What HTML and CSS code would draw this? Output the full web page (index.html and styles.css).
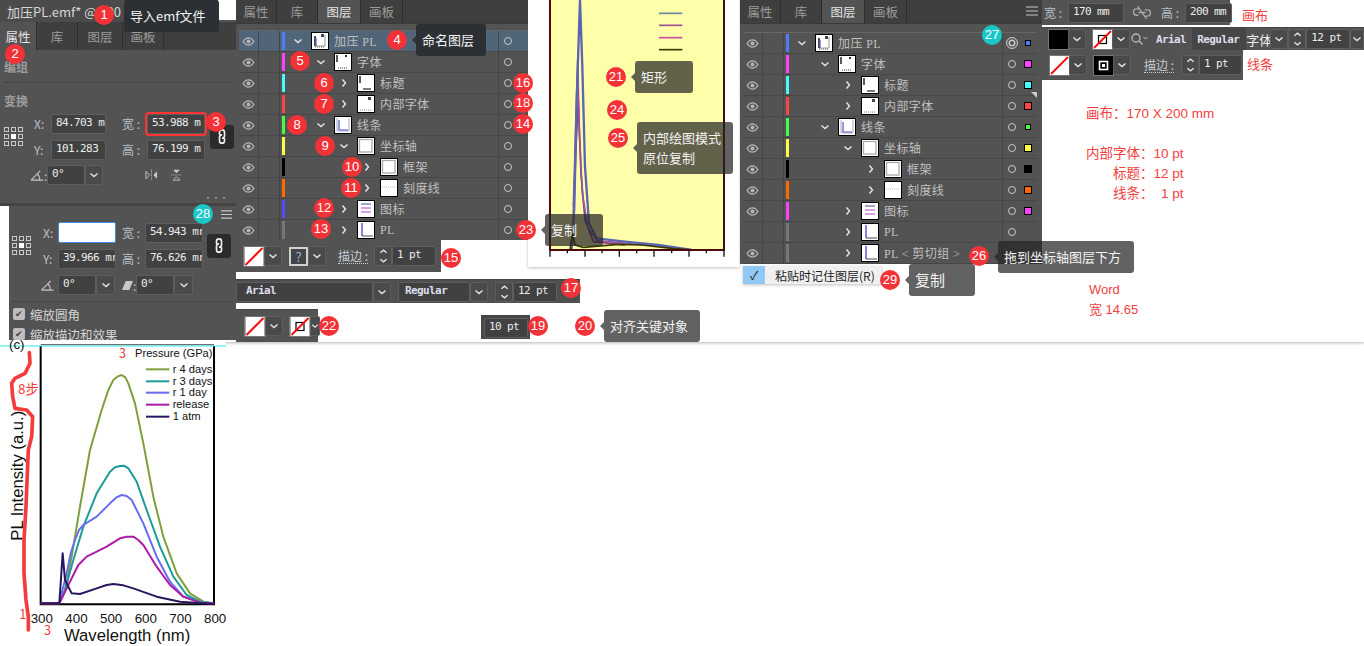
FILE: index.html
```html
<!DOCTYPE html>
<html lang="zh">
<head>
<meta charset="utf-8">
<title>加压 PL</title>
<link rel="stylesheet" href="styles.css">
</head>
<body>
<svg class="defs" aria-hidden="true">
  <symbol id="eye" viewBox="0 0 14 10"><path d="M1 5C3 2 5 1 7 1s4 1 6 4c-2 3-4 4-6 4S3 8 1 5z" fill="none" stroke="#b4b4b4" stroke-width="1.4"/><circle cx="7" cy="5" r="2.2" fill="#b4b4b4"/></symbol>
  <symbol id="dn" viewBox="0 0 10 10"><path d="M1.5 3.5L5 6.5l3.5-3" fill="none" stroke="#e6e6e6" stroke-width="1.4"/></symbol>
  <symbol id="rt" viewBox="0 0 10 10"><path d="M3.5 1.5L6.5 5l-3 3.5" fill="none" stroke="#e6e6e6" stroke-width="1.4"/></symbol>
  <symbol id="up" viewBox="0 0 10 10"><path d="M1.5 6.5L5 3.5l3.5 3" fill="none" stroke="#e6e6e6" stroke-width="1.4"/></symbol>
  <symbol id="link" viewBox="0 0 12 20"><path d="M3 8V5a3 3 0 0 1 6 0v4a3 3 0 0 1-3 3M9 12v3a3 3 0 0 1-6 0v-4a3 3 0 0 1 3-3" fill="none" stroke="#eee" stroke-width="2"/></symbol>
  <symbol id="refpt" viewBox="0 0 19 19"><g fill="none" stroke="#c8c8c8"><rect x=".5" y=".5" width="4" height="4"/><rect x="7.5" y=".5" width="4" height="4"/><rect x="14.5" y=".5" width="4" height="4"/><rect x=".5" y="7.5" width="4" height="4"/><rect x="14.5" y="7.5" width="4" height="4"/><rect x=".5" y="14.5" width="4" height="4"/><rect x="7.5" y="14.5" width="4" height="4"/><rect x="14.5" y="14.5" width="4" height="4"/></g><rect x="7" y="7" width="5" height="5" fill="#fff"/></symbol>
  <symbol id="angle" viewBox="0 0 15 12"><path d="M1 11L11 1M1 11h13M8 4.500c2 1.500 2.500 4 2.500 6.500" fill="none" stroke="#c8c8c8" stroke-width="1.200"/></symbol>
  <symbol id="flip-h" viewBox="0 0 14 12"><path d="M1 2l4 4-4 4z" fill="none" stroke="#c8c8c8"/><path d="M13 2L9 6l4 4z" fill="#c8c8c8"/><path d="M7 0v12" stroke="#c8c8c8" stroke-dasharray="1 1"/></symbol>
  <symbol id="flip-v" viewBox="0 0 12 14"><path d="M2 1h8L6 5z" fill="#c8c8c8"/><path d="M2 13h8L6 9z" fill="none" stroke="#c8c8c8"/><path d="M0 7h12" stroke="#c8c8c8" stroke-dasharray="1 1"/></symbol>
  <symbol id="nofill" viewBox="0 0 19 19"><rect width="19" height="19" fill="#fff"/><path d="M1 18L18 1" stroke="#f01010" stroke-width="2"/></symbol>
  <symbol id="nostroke" viewBox="0 0 19 19"><rect width="19" height="19" fill="#fff"/><rect x="5.500" y="5.500" width="8" height="8" fill="none" stroke="#000" stroke-width="1.200"/><path d="M1 18L18 1" stroke="#f01010" stroke-width="2"/></symbol>
  <symbol id="blackstroke" viewBox="0 0 19 19"><rect width="19" height="19" fill="#000"/><rect x="5.500" y="5.500" width="8" height="8" fill="none" stroke="#fff" stroke-width="1.600"/><rect x="8" y="8" width="3" height="3" fill="#fff"/></symbol>
  <symbol id="search" viewBox="0 0 18 14"><circle cx="6" cy="6" r="4" fill="none" stroke="#bbb" stroke-width="1.300"/><path d="M9 9l3.500 3.500" stroke="#bbb" stroke-width="1.300"/><path d="M13.500 5l2 2 2-2" fill="none" stroke="#bbb"/></symbol>
  <symbol id="unlink" viewBox="0 0 20 14"><path d="M7 3H4a3.500 3.500 0 0 0 0 7h2M13 4h3a3.500 3.500 0 0 1 0 7h-3M6 7h8M5 0l10 14" fill="none" stroke="#aaa" stroke-width="1.500"/></symbol>
  <symbol id="lines" viewBox="0 0 12 10"><path d="M0 1h12M0 5h12M0 9h12" stroke="#c8c8c8" stroke-width="1.200"/></symbol>
  <symbol id="skew" viewBox="0 0 12 12"><path d="M4 1h8L8 11H0z" fill="#c8c8c8"/></symbol>
  <symbol id="t-all" viewBox="0 0 16 16"><rect width="16" height="16" fill="#fff"/><path d="M3 3v10h10V2" fill="none" stroke="#999"/><path d="M3 3v10" stroke="#223" stroke-width="1.500"/><path d="M4 13V5" stroke="#55c" stroke-width="1.200"/><path d="M3 14h10" stroke="#555" stroke-dasharray="1 1"/><path d="M9 1h3v3h-3z" fill="#445"/></symbol>
  <symbol id="t-font" viewBox="0 0 16 16"><rect width="16" height="16" fill="#fff"/><path d="M2 1v7" stroke="#000" stroke-width="1.300"/><path d="M10 1h2v2h-2z" fill="#333"/><path d="M3 14h10" stroke="#333" stroke-dasharray="1 1"/></symbol>
  <symbol id="t-title" viewBox="0 0 16 16"><rect width="16" height="16" fill="#fff"/><path d="M2 1v7" stroke="#000" stroke-width="1.300"/><path d="M5 14h8" stroke="#333" stroke-width="1.300"/></symbol>
  <symbol id="t-inner" viewBox="0 0 16 16"><rect width="16" height="16" fill="#fff"/><path d="M10 1h3v3h-3z" fill="#444"/><path d="M2 14h11" stroke="#888" stroke-dasharray="1 1"/></symbol>
  <symbol id="t-lines" viewBox="0 0 16 16"><rect width="16" height="16" fill="#fff"/><path d="M2 1v13h12V1" fill="none" stroke="#aab"/><path d="M4 13V3" stroke="#55c" stroke-width="1.200"/><path d="M4 13h9" stroke="#55c"/></symbol>
  <symbol id="t-axis" viewBox="0 0 16 16"><rect width="16" height="16" fill="#fff"/><rect x="1.500" y="1.500" width="12.500" height="12.500" fill="none" stroke="#aaa" stroke-width="1.300"/></symbol>
  <symbol id="t-tick" viewBox="0 0 16 16"><rect width="16" height="16" fill="#fff"/><path d="M1 7h14" stroke="#bbb" stroke-dasharray="1 1"/></symbol>
  <symbol id="t-legend" viewBox="0 0 16 16"><rect width="16" height="16" fill="#fff"/><path d="M3 3h10" stroke="#66a" stroke-width="1.200"/><path d="M3 7h10" stroke="#b6c" stroke-width="1.200"/><path d="M3 11h10" stroke="#b6c" stroke-width="1.200"/></symbol>
  <symbol id="t-pl" viewBox="0 0 16 16"><rect width="16" height="16" fill="#fff"/><path d="M4 14V1" stroke="#44c" stroke-width="1.300"/><path d="M4 14h11" stroke="#667" stroke-width="1.200"/></symbol>
</svg>

<main class="desk">
  <div class="sheet"></div>

  <!-- Properties window -->
  <section class="win props">
    <div class="doc">加压PL.emf* @ 100 % (RGB/预览)</div>
    <div class="tabs tabs-a"><span class="tab on">属性</span><span class="tab">库</span><span class="tab">图层</span><span class="tab">画板</span></div>
    <div class="sec-title first">编组</div>
    <div class="rule"></div>
    <div class="sec-title">变换</div>
    <div class="xf xf-a">
      <svg class="refpt"><use href="#refpt"/></svg>
      <span class="lb l1">X:</span><span class="fld">84.703 m</span><span class="lb l2">宽 :</span><span class="fld hot">53.988 m</span>
      <span class="lb l3">Y:</span><span class="fld">101.283</span><span class="lb l4">高 :</span><span class="fld">76.199 m</span>
      <span class="linkbtn"><svg><use href="#link"/></svg></span>
    </div>
    <div class="angle-row">
      <svg class="ang"><use href="#angle"/></svg><span class="colon">:</span>
      <span class="fld w-a">0°</span><span class="drop"><svg><use href="#dn"/></svg></span>
      <svg class="flip first-flip"><use href="#flip-h"/></svg><svg class="flip"><use href="#flip-v"/></svg>
    </div>
    <div class="dots">•••</div>
  </section>

  <section class="win props2">
    <div class="xf xf-b">
      <svg class="refpt"><use href="#refpt"/></svg>
      <span class="lb l1">X:</span><span class="fld blank"></span><span class="lb l2">宽 :</span><span class="fld">54.943 mr</span>
      <span class="lb l3">Y:</span><span class="fld">39.966 mr</span><span class="lb l4">高 :</span><span class="fld">76.626 mr</span>
      <span class="linkbtn"><svg><use href="#link"/></svg></span>
    </div>
    <div class="angle-row row2">
      <svg class="ang"><use href="#angle"/></svg>
      <span class="fld w-b">0°</span><span class="drop d2"><svg><use href="#dn"/></svg></span>
      <svg class="skew"><use href="#skew"/></svg><span class="colon">:</span>
      <span class="fld w-b">0°</span><span class="drop d2"><svg><use href="#dn"/></svg></span>
    </div>
    <div class="rule r2"></div>
    <div class="chk"><i>✔</i>缩放圆角</div>
    <div class="chk"><i>✔</i>缩放描边和效果</div>
    <svg class="menu2"><use href="#lines"/></svg>
  </section>

  <!-- Middle canvas -->
  <section class="canvas">
    <svg viewBox="9 0 633 801" width="211" height="267">
      <rect x="75" y="0" width="522" height="750" fill="#ffffaa"/>
      <path d="M402 40h70" stroke="#6a88a8" stroke-width="5"/><path d="M402 76h70" stroke="#a0509a" stroke-width="5"/><path d="M402 113h70" stroke="#c8509a" stroke-width="5"/><path d="M402 149h70" stroke="#3a3a00" stroke-width="5"/>
      <g fill="none" stroke-width="5" stroke-linejoin="round">
        <path d="M145 640L155 400L160 300L168 520L180 660L205 725L300 735" stroke="#803c80"/>
        <path d="M145 620L152 380L158 185L163 400L172 580L188 680L215 722L300 730L400 738" stroke="#a0509a"/>
        <path d="M140 748L148 620L155 300L165 0L172 200L180 500L192 670L215 715L300 725L400 735L500 750" stroke="#5a66b4" stroke-width="7"/>
        <path d="M135 748L143 700L150 735L175 742L280 733L350 735L440 745L510 750" stroke="#3a3a00"/>
      </g>
      <path d="M75 0V750H597V0" fill="none" stroke="#4a0a0a" stroke-width="6"/>
      <path d="M75 750v20M180 750v20M283 750v20M387 750v20M492 750v20M597 750v20M127 750v10M231 750v10M335 750v10M440 750v10M544 750v10" stroke="#111" stroke-width="4"/>
    </svg>
  </section>

  <!-- Layers window, selected -->
  <section class="win layers la">
    <div class="tabs tabs-b"><span class="tab">属性</span><span class="tab">库</span><span class="tab on">图层</span><span class="tab">画板</span></div>
    <div class="rows">
      <div class="row sel"><span class="eye"><svg><use href="#eye"/></svg></span><span class="lock"></span><i class="bar blue"></i><span class="tree t0"><svg class="chev"><use href="#dn"/></svg><svg class="thumb"><use href="#t-all"/></svg><span class="name">加压 PL</span></span><span class="tgt"><i class="ring"></i></span></div>
      <div class="row"><span class="eye"><svg><use href="#eye"/></svg></span><span class="lock"></span><i class="bar magenta"></i><span class="tree t1"><svg class="chev"><use href="#dn"/></svg><svg class="thumb"><use href="#t-font"/></svg><span class="name">字体</span></span><span class="tgt"><i class="ring"></i></span></div>
      <div class="row"><span class="eye"><svg><use href="#eye"/></svg></span><span class="lock"></span><i class="bar cyan"></i><span class="tree t2"><svg class="chev"><use href="#rt"/></svg><svg class="thumb"><use href="#t-title"/></svg><span class="name">标题</span></span><span class="tgt"><i class="ring"></i></span></div>
      <div class="row"><span class="eye"><svg><use href="#eye"/></svg></span><span class="lock"></span><i class="bar red"></i><span class="tree t2"><svg class="chev"><use href="#rt"/></svg><svg class="thumb"><use href="#t-inner"/></svg><span class="name">内部字体</span></span><span class="tgt"><i class="ring"></i></span></div>
      <div class="row"><span class="eye"><svg><use href="#eye"/></svg></span><span class="lock"></span><i class="bar green"></i><span class="tree t1"><svg class="chev"><use href="#dn"/></svg><svg class="thumb"><use href="#t-lines"/></svg><span class="name">线条</span></span><span class="tgt"><i class="ring"></i></span></div>
      <div class="row"><span class="eye"><svg><use href="#eye"/></svg></span><span class="lock"></span><i class="bar yellow"></i><span class="tree t2"><svg class="chev"><use href="#dn"/></svg><svg class="thumb"><use href="#t-axis"/></svg><span class="name">坐标轴</span></span><span class="tgt"><i class="ring"></i></span></div>
      <div class="row"><span class="eye"><svg><use href="#eye"/></svg></span><span class="lock"></span><i class="bar black"></i><span class="tree t3"><svg class="chev"><use href="#rt"/></svg><svg class="thumb"><use href="#t-axis"/></svg><span class="name">框架</span></span><span class="tgt"><i class="ring"></i></span></div>
      <div class="row"><span class="eye"><svg><use href="#eye"/></svg></span><span class="lock"></span><i class="bar orange"></i><span class="tree t3"><svg class="chev"><use href="#rt"/></svg><svg class="thumb"><use href="#t-tick"/></svg><span class="name">刻度线</span></span><span class="tgt"><i class="ring"></i></span></div>
      <div class="row"><span class="eye"><svg><use href="#eye"/></svg></span><span class="lock"></span><i class="bar indigo"></i><span class="tree t2"><svg class="chev"><use href="#rt"/></svg><svg class="thumb"><use href="#t-legend"/></svg><span class="name">图标</span></span><span class="tgt"><i class="ring"></i></span></div>
      <div class="row"><span class="eye"><svg><use href="#eye"/></svg></span><span class="lock"></span><i class="bar gray"></i><span class="tree t2"><svg class="chev"><use href="#rt"/></svg><svg class="thumb"><use href="#t-pl"/></svg><span class="name">PL</span></span><span class="tgt"><i class="ring"></i></span></div>
    </div>
  </section>

  <!-- Layers window, with swatches -->
  <section class="win layers lb-win">
    <div class="tabs tabs-b"><span class="tab">属性</span><span class="tab">库</span><span class="tab on">图层</span><span class="tab">画板</span><svg class="ham"><use href="#lines"/></svg></div>
    <div class="rows">
      <div class="row"><span class="eye"><svg><use href="#eye"/></svg></span><span class="lock"></span><i class="bar blue"></i><span class="tree t0"><svg class="chev"><use href="#dn"/></svg><svg class="thumb"><use href="#t-all"/></svg><span class="name">加压 PL</span></span><span class="tgt"><i class="ring dbl"></i><i class="sw small blue"></i></span></div>
      <div class="row"><span class="eye"><svg><use href="#eye"/></svg></span><span class="lock"></span><i class="bar magenta"></i><span class="tree t1"><svg class="chev"><use href="#dn"/></svg><svg class="thumb"><use href="#t-font"/></svg><span class="name">字体</span></span><span class="tgt"><i class="ring"></i><i class="sw magenta"></i></span></div>
      <div class="row"><span class="eye"><svg><use href="#eye"/></svg></span><span class="lock"></span><i class="bar cyan"></i><span class="tree t2"><svg class="chev"><use href="#rt"/></svg><svg class="thumb"><use href="#t-title"/></svg><span class="name">标题</span></span><span class="tgt"><i class="ring"></i><i class="sw cyan"></i></span></div>
      <div class="row"><span class="eye"><svg><use href="#eye"/></svg></span><span class="lock"></span><i class="bar red"></i><span class="tree t2"><svg class="chev"><use href="#rt"/></svg><svg class="thumb"><use href="#t-inner"/></svg><span class="name">内部字体</span></span><span class="tgt"><i class="ring"></i><i class="sw red"></i><i class="corner"></i></span></div>
      <div class="row"><span class="eye"><svg><use href="#eye"/></svg></span><span class="lock"></span><i class="bar green"></i><span class="tree t1"><svg class="chev"><use href="#dn"/></svg><svg class="thumb"><use href="#t-lines"/></svg><span class="name">线条</span></span><span class="tgt"><i class="ring"></i><i class="sw small green"></i></span></div>
      <div class="row"><span class="eye"><svg><use href="#eye"/></svg></span><span class="lock"></span><i class="bar yellow"></i><span class="tree t2"><svg class="chev"><use href="#dn"/></svg><svg class="thumb"><use href="#t-axis"/></svg><span class="name">坐标轴</span></span><span class="tgt"><i class="ring"></i><i class="sw yellow"></i></span></div>
      <div class="row"><span class="eye"><svg><use href="#eye"/></svg></span><span class="lock"></span><i class="bar black"></i><span class="tree t3"><svg class="chev"><use href="#rt"/></svg><svg class="thumb"><use href="#t-axis"/></svg><span class="name">框架</span></span><span class="tgt"><i class="ring"></i><i class="sw black"></i></span></div>
      <div class="row"><span class="eye"><svg><use href="#eye"/></svg></span><span class="lock"></span><i class="bar orange"></i><span class="tree t3"><svg class="chev"><use href="#rt"/></svg><svg class="thumb"><use href="#t-tick"/></svg><span class="name">刻度线</span></span><span class="tgt"><i class="ring"></i><i class="sw orange"></i></span></div>
      <div class="row"><span class="eye"><svg><use href="#eye"/></svg></span><span class="lock"></span><i class="bar magenta"></i><span class="tree t2"><svg class="chev"><use href="#rt"/></svg><svg class="thumb"><use href="#t-legend"/></svg><span class="name">图标</span></span><span class="tgt"><i class="ring"></i><i class="sw magenta"></i></span></div>
      <div class="row"><span class="eye"></span><span class="lock"></span><i class="bar gray"></i><span class="tree t2"><svg class="chev"><use href="#rt"/></svg><svg class="thumb"><use href="#t-pl"/></svg><span class="name">PL</span></span><span class="tgt"><i class="ring"></i></span></div>
      <div class="row"><span class="eye"><svg><use href="#eye"/></svg></span><span class="lock"></span><i class="bar gray"></i><span class="tree t2"><svg class="chev"><use href="#rt"/></svg><svg class="thumb"><use href="#t-pl"/></svg><span class="name">PL &lt; 剪切组 &gt;</span></span><span class="tgt"></span></div>
    </div>
  </section>

  <div class="popmenu"><span class="tick">✓</span><span class="ptext">粘贴时记住图层(R)</span></div>

  <!-- Toolbars -->
  <div class="tbar tb15">
    <svg class="box"><use href="#nofill"/></svg><span class="drop"><svg><use href="#dn"/></svg></span>
    <span class="qbox">?</span><span class="drop"><svg><use href="#dn"/></svg></span>
    <span class="dotlabel">描边 :</span>
    <span class="spin"><svg><use href="#up"/></svg><svg><use href="#dn"/></svg></span><span class="fld ptf">1 pt</span>
  </div>
  <div class="tbar tb17">
    <span class="fld fontf">Arial</span><span class="drop"><svg><use href="#dn"/></svg></span>
    <span class="fld stylef">Regular</span><span class="drop"><svg><use href="#dn"/></svg></span>
    <span class="spin"><svg><use href="#up"/></svg><svg><use href="#dn"/></svg></span><span class="fld ptf">12 pt</span>
  </div>
  <div class="tbar tb22">
    <svg class="box"><use href="#nofill"/></svg><span class="drop"><svg><use href="#dn"/></svg></span>
    <svg class="box"><use href="#nostroke"/></svg><span class="drop"><svg><use href="#dn"/></svg></span>
  </div>
  <div class="tbar tb19"><span class="fld ptf">10 pt</span></div>

  <div class="tbar tr1">
    <span class="lb">宽 :</span><span class="fld sizef">170 mm</span><svg class="unl"><use href="#unlink"/></svg><span class="lb">高 :</span><span class="fld sizef">200 mm</span>
  </div>
  <div class="tbar tr2">
    <span class="box blackbox"></span><span class="drop"><svg><use href="#dn"/></svg></span>
    <svg class="box"><use href="#nostroke"/></svg><span class="drop"><svg><use href="#dn"/></svg></span>
    <svg class="sr"><use href="#search"/></svg><span class="plain">Arial</span><span class="plain darker">Regular</span><span class="ctext">字体</span><span class="drop"><svg><use href="#dn"/></svg></span>
    <span class="spin"><svg><use href="#up"/></svg><svg><use href="#dn"/></svg></span><span class="fld ptf">12 pt</span><span class="drop"><svg><use href="#dn"/></svg></span>
  </div>
  <div class="tbar tr3">
    <svg class="box"><use href="#nofill"/></svg><span class="drop"><svg><use href="#dn"/></svg></span>
    <svg class="box"><use href="#blackstroke"/></svg><span class="drop"><svg><use href="#dn"/></svg></span>
    <span class="dotlabel">描边 :</span>
    <span class="spin"><svg><use href="#up"/></svg><svg><use href="#dn"/></svg></span><span class="fld ptf">1 pt</span>
  </div>

  <!-- Notes -->
  <div class="note n-canvas">画布</div>
  <div class="note n-line">线条</div>
  <div class="note n-spec">
    <p>画布：170 X 200 mm</p>
    <p class="gap">内部字体：10 pt</p>
    <p class="in">标题：12 pt</p>
    <p class="in">线条： &nbsp;1 pt</p>
  </div>
  <div class="note n-word"><p>Word</p><p>宽 14.65</p></div>

  <!-- Chart -->
  <section class="chart">
    <svg viewBox="0 0 678 918" width="226" height="306">
      <path d="M122 18V793H642V18" fill="none" stroke="#000" stroke-width="6"/>
      <path d="M122 14H642" stroke="#555" stroke-width="3"/>
      <path d="M0 18H678" stroke="#30e8e8" stroke-width="3"/>
      <g fill="none" stroke-width="6" stroke-linejoin="round">
        <path d="M122 790H178L195 750L215 650L240 500L270 330L305 210L325 150L340 120L352 110L365 105L376 112L385 130L405 190L430 310L460 470L490 590L530 700L570 760L610 785L640 790" stroke="#7f9f3c"/>
        <path d="M178 790L195 750L220 660L250 560L290 460L330 395L345 382L360 378L372 377L385 385L410 425L440 510L480 620L520 710L560 765L600 785L640 790" stroke="#1c9c98"/>
        <path d="M178 788L200 700L212 640L225 600L237 570L250 555L290 530L330 490L350 472L365 465L380 468L395 480L430 550L470 650L510 725L550 770L600 788L640 790" stroke="#6a6cf0"/>
        <path d="M122 790H178L205 735L235 675L260 650L320 620L360 595L380 590L400 590L415 600L430 615L470 680L510 735L550 770L600 788L640 790" stroke="#b01aa8"/>
        <path d="M122 790H178L188 640L195 720L215 760L240 762L290 745L320 735L340 732L370 736L400 745L470 770L540 785L640 792" stroke="#2a1560"/>
        <path d="M438 88h70" stroke="#7f9f3c"/><path d="M438 124h70" stroke="#1c9c98"/><path d="M438 158h70" stroke="#6a6cf0"/><path d="M438 194h70" stroke="#b01aa8"/><path d="M438 230h70" stroke="#2a1560"/>
      </g>
      <g class="leg">
        <text x="405" y="52">Pressure (GPa)</text><text x="518" y="98">r 4 days</text><text x="518" y="134">r 3 days</text><text x="518" y="168">r 1 day</text><text x="518" y="204">release</text><text x="518" y="240">1 atm</text>
      </g>
      <g class="tk">
        <text x="92" y="848">300</text><text x="196" y="848">400</text><text x="300" y="848">500</text><text x="404" y="848">600</text><text x="508" y="848">700</text><text x="612" y="848">800</text>
      </g>
      <text class="xl" x="192" y="904">Wavelength (nm)</text>
      <text class="yl" transform="translate(68 602) rotate(-90)">PL Intensity (a.u.)</text>
      <text class="cl" x="27" y="26">(c)</text>
      <path d="M88 38L90 70L75 100L45 115L35 130L38 170L45 205L80 210L98 230L95 290L85 330L82 400L78 500L72 600L72 700L78 780L85 830L85 870" fill="none" stroke="#f43c3c" stroke-width="11" stroke-linejoin="round" stroke-linecap="round"/>
      <text class="rd big" x="357" y="55">3</text>
      <text class="rd" x="54" y="163">8步</text>
      <text class="rd big" x="58" y="838">1</text>
      <text class="rd big" x="132" y="884">3</text>
    </svg>
  </section>

  <!-- Tooltips -->
  <div class="tip dark t-emf">导入emf文件</div>
  <div class="tip dark arrow t-name">命名图层</div>
  <div class="tip arrow t-copy1">复制</div>
  <div class="tip arrow t-align">对齐关键对象</div>
  <div class="tip arrow t-rect">矩形</div>
  <div class="tip arrow t-inner">内部绘图模式<br>原位复制</div>
  <div class="tip arrow t-drag">拖到坐标轴图层下方</div>
  <div class="tip arrow t-copy2">复制</div>

  <!-- Numbered badges -->
  <span class="bdg p1">1</span><span class="bdg p2">2</span><span class="bdg p3">3</span><span class="bdg p4">4</span><span class="bdg p5">5</span><span class="bdg p6">6</span><span class="bdg p7">7</span><span class="bdg p8">8</span><span class="bdg p9">9</span><span class="bdg p10">10</span><span class="bdg p11">11</span><span class="bdg p12">12</span><span class="bdg p13">13</span><span class="bdg p14">14</span><span class="bdg p15">15</span><span class="bdg p16">16</span><span class="bdg p17">17</span><span class="bdg p18">18</span><span class="bdg p19">19</span><span class="bdg p20">20</span><span class="bdg p21">21</span><span class="bdg p22">22</span><span class="bdg p23">23</span><span class="bdg p24">24</span><span class="bdg p25">25</span><span class="bdg p26">26</span><span class="bdg teal p27">27</span><span class="bdg teal p28">28</span><span class="bdg p29">29</span>
</main>
</body>
</html>
```

FILE: styles.css
```css
* { box-sizing: border-box; }
html, body { margin: 0; padding: 0; background: #fff; overflow: hidden; }
body { font-family: "Noto Sans CJK SC", "Liberation Sans", sans-serif; font-size: 12px; }
.defs { position: absolute; width: 0; height: 0; }
p { margin: 0; }

.desk { position: relative; width: 1364px; height: 646px; overflow: hidden; }
.sheet { position: absolute; left: 0; top: 0; width: 1364px; height: 342px; background: #fff; box-shadow: 0 1px 3px rgba(0,0,0,.3); }

/* windows */
.win { position: absolute; background: #535353; color: #c4c4c4; }
.props { left: 0; top: 0; width: 236px; height: 206px; background: linear-gradient(#fff 0, #fff 20px, #535353 20px); border-bottom: 3px solid #444; }
.doc { width: 218px; height: 22px; margin-top: 0; background: #4b4b4b; color: #d8d8d8; font-size: 13px; line-height: 24px; padding-left: 7px; white-space: nowrap; overflow: hidden; position: absolute; top: 0; left: 0; }
.tabs { display: flex; background: #3f3f3f; }
.tabs-a { height: 28px; margin-top: 22px; }
.tabs-b { height: 24px; position: relative; border-bottom: 1px solid #3a3a3a; }
.tab { display: flex; align-items: center; justify-content: center; color: #9c9c9c; font-size: 12.5px; border-right: 1px solid #2f2f2f; }
.tabs-a .tab { width: 41px; }
.tabs-a .tab:first-child { width: 37px; }
.tabs-a .tab:nth-child(3) { width: 45px; }
.tabs-b .tab { width: 41px; }
.tabs-b .tab:nth-child(3) { width: 43px; }
.tabs-b .tab:nth-child(4) { width: 42px; }
.tab.on { background: #535353; color: #e4e4e4; }
.ham { position: absolute; right: 4px; top: 6px; width: 12px; height: 10px; }

.sec-title { padding-left: 4px; color: #9e9e9e; font-size: 12px; font-weight: 700; line-height: 18px; margin-top: 9px; }
.sec-title.first { margin-top: 8px; }
.rule { height: 1px; background: #444; margin: 6px 4px 0; }

.xf { display: grid; grid-template-rows: 21px 21px; row-gap: 5px; align-items: center; }
.xf-a { grid-template-columns: 19px 28px 55px 41px 58px 24px; margin: 3px 0 0 4px; }
.xf-b { grid-template-columns: 19px 27px 58px 29px 58px 24px; margin: 16px 0 0 3px; }
.refpt { width: 19px; height: 19px; grid-row: 1 / span 2; grid-column: 1; }
.linkbtn { grid-row: 1 / span 2; grid-column: 6; margin-left: 5px; width: 24px; height: 24px; background: #2b2b2b; border-radius: 3px; display: flex; align-items: center; justify-content: center; }
.xf-b .linkbtn { margin-left: 4px; }
.linkbtn svg { width: 10px; height: 17px; }
.lb { color: #b8c0c8; font-size: 12px; white-space: nowrap; text-align: left; }
.l1 { grid-column: 2; grid-row: 1; } .l3 { grid-column: 2; grid-row: 2; }
.l2 { grid-column: 4; grid-row: 1; } .l4 { grid-column: 4; grid-row: 2; }
.xf-a .l1, .xf-a .l3 { padding-left: 11px; }
.xf-a .l2, .xf-a .l4 { padding-left: 16px; }
.xf-b .l1, .xf-b .l3 { padding-left: 12px; }
.xf-b .l2, .xf-b .l4 { padding-left: 6px; }
.fld { display: block; height: 20px; line-height: 15px; background: #414141; border: 1px solid #5e5e5e; border-radius: 2px; color: #ececec; font-family: "DejaVu Sans Mono", "Liberation Mono", monospace; font-size: 11px; letter-spacing: -.6px; padding-left: 4px; white-space: nowrap; overflow: hidden; }
.fld.hot { outline: 2px solid #f33; outline-offset: 0; }
.fld.blank { background: #fff; border-color: #3d8be0; height: 21px; }
.angle-row { display: flex; align-items: center; margin: 5px 0 0 30px; }
.ang { width: 14px; height: 11px; flex: none; }
.colon { width: 3px; color: #b8c0c8; flex: none; }
.w-a { width: 38px; flex: none; }
.drop { display: flex; align-items: center; justify-content: center; width: 18px; height: 20px; background: #4a4a4a; border: 1px solid #5e5e5e; border-radius: 2px; flex: none; }
.drop svg { width: 10px; height: 10px; }
.flip { width: 13px; height: 12px; margin-left: 12px; flex: none; }
.first-flip { margin-left: 42px; }
.dots { position: absolute; right: 8px; bottom: 0; font-size: 8px; line-height: 10px; color: #bbb; }

.props2 { left: 9px; top: 206px; width: 227px; height: 134px; overflow: hidden; }
.row2 { margin: 6px 0 0 30px; }
.row2 .ang { width: 15px; margin-left: 1px; margin-right: 3px; }
.w-b { width: 38px; flex: none; }
.d2 { width: 19px; }
.skew { width: 11px; height: 11px; margin: 0 0 0 7px; flex: none; }
.r2 { margin: 6px 3px 0 3px; }
.chk { display: flex; align-items: center; font-size: 12.5px; color: #d4d4d4; height: 20px; padding-left: 4px; }
.r2 + .chk { margin-top: 2px; }
.chk i { width: 12px; height: 12px; margin-right: 5px; background: #bdbdbd; border-radius: 2px; color: #444; font-style: normal; font-size: 9px; line-height: 12px; text-align: center; }
.menu2 { position: absolute; left: 212px; top: 4px; width: 11px; height: 9px; }

/* layers */
.layers { top: 0; }
.la { left: 236px; width: 292px; height: 240px; overflow: hidden; }
.lb-win { left: 740px; width: 302px; height: 264px; }
.rows { margin: 6px 5px 0 3px; border-top: 1px solid #666; }
.lb-win .rows { margin-top: 8px; }
.la .rows { margin-right: 0; }
.row { display: flex; align-items: center; height: 21px; border-bottom: 1px solid #474747; }
.row.sel { background: #506578; }
.eye { width: 20px; height: 100%; display: flex; align-items: center; justify-content: center; border-right: 1px solid #444; flex: none; }
.eye svg { width: 13px; height: 9px; }
.lock { width: 21px; height: 100%; border-right: 1px solid #444; flex: none; }
.bar { width: 3px; height: 18px; margin-left: 2px; flex: none; }
.tree { display: flex; align-items: center; flex: 1; height: 100%; white-space: nowrap; min-width: 0; }
.t0 { padding-left: 8px; } .t1 { padding-left: 31px; } .t2 { padding-left: 54px; } .t3 { padding-left: 77px; }
.chev { width: 10px; height: 10px; flex: none; }
.thumb { width: 18px; height: 18px; margin-left: 8px; border: 1px solid #000; flex: none; background: #fff; }
.name { margin-left: 5px; font-family: "Liberation Serif", "Noto Sans CJK SC", serif; font-size: 12px; color: #c0c0c0; letter-spacing: .4px; }
.tgt { width: 35px; height: 100%; border-left: 1px solid #444; display: flex; align-items: center; padding-left: 5px; position: relative; flex: none; }
.la .tgt { width: 30px; }
.ring { width: 8px; height: 8px; border: 1px solid #c8c8c8; border-radius: 50%; flex: none; }
.ring.dbl { width: 12px; height: 12px; margin-left: -2px; box-shadow: inset 0 0 0 1.5px #535353, inset 0 0 0 3px #c8c8c8; }
.sw { position: absolute; left: 21px; top: 6px; width: 8px; height: 8px; border: 1px solid #000; }
.sw.small { left: 22px; top: 7px; width: 6px; height: 6px; }
.corner { position: absolute; right: 0; top: -4px; border-top: 6px solid #ccc; border-left: 6px solid transparent; }
.bar.blue, .sw.blue { background: #4f7cff; }
.magenta { background: #ff40ff; }
.cyan { background: #40ffff; }
.red { background: #ff4545; }
.green { background: #45ff45; }
.yellow { background: #ffff40; }
.black { background: #000; }
.orange { background: #ff6a00; }
.indigo { background: #4f4fff; }
.gray { background: #777; }

.popmenu { position: absolute; left: 743px; top: 266px; width: 139px; height: 18px; display: flex; align-items: center; background: #f0f0f0; font-size: 12px; color: #222; box-shadow: 0 1px 3px rgba(0,0,0,.25); }
.tick { width: 22px; height: 18px; background: #90c8f6; text-align: center; line-height: 18px; color: #222; }
.ptext { margin-left: 10px; white-space: nowrap; }

/* canvas */
.canvas { position: absolute; left: 528px; top: 0; width: 211px; height: 267px; background: #fff; box-shadow: 0 1px 3px rgba(0,0,0,.25); }
.canvas svg { display: block; }

/* toolbars */
.tbar { position: absolute; display: flex; align-items: center; background: #535353; border-top: 1px solid #444; }
.box { width: 20px; height: 19px; flex: none; outline: 1px solid #777; display: block; }
.blackbox { background: #000; }
.qbox { width: 19px; height: 19px; margin-left: 7px; background: #444; border: 2px solid #d0d0d0; color: #8fb8e0; font-size: 13px; line-height: 15px; text-align: center; flex: none; }
.dotlabel { color: #c4ccd4; font-size: 12px; border-bottom: 1px dotted #ccc; line-height: 14px; margin: 0 6px 0 12px; white-space: nowrap; }
.spin { display: flex; flex-direction: column; align-items: center; justify-content: center; width: 18px; height: 20px; background: #4a4a4a; border: 1px solid #5e5e5e; flex: none; }
.spin svg { width: 9px; height: 9px; }
.ptf { width: 44px; flex: none; }
.tb15 { left: 236px; top: 240px; width: 205px; height: 32px; padding-left: 8px; border-top: 0; }
.tb17 { left: 236px; top: 279px; width: 344px; height: 24px; background: #4f4f4f; }
.fontf { width: 137px; padding-left: 9px; font-weight: 700; color: #dde; }
.stylef { width: 72px; margin-left: 7px; padding-left: 6px; font-weight: 700; color: #dde; }
.tb17 .spin { margin-left: 7px; }
.tb22 { left: 236px; top: 309px; width: 82px; height: 33px; padding-left: 9px; }
.tb22 .box + .drop + .box { margin-left: 7px; }
.tb22 .drop:last-child { width: 10px; }
.tb19 { left: 481px; top: 315px; width: 49px; height: 24px; padding-left: 3px; background: #484848; }
.tb19 .ptf { width: 44px; }
.tr1 { left: 1042px; top: 0; width: 188px; height: 25px; padding-left: 2px; border: 0; }
.tr1 .lb { width: 24px; flex: none; }
.sizef { width: 56px; flex: none; }
.tr1 .sizef:last-child { width: 47px; }
.unl { width: 18px; height: 13px; margin: 0 10px 0 9px; flex: none; }
.tr2 { left: 1042px; top: 27px; width: 322px; height: 23px; padding-left: 7px; }
.tr2 .box { width: 19px; }
.tr2 .box + .drop + .box { margin-left: 7px; }
.sr { width: 18px; height: 14px; flex: none; }
.plain { font-family: "DejaVu Sans Mono", monospace; font-weight: 700; font-size: 11px; letter-spacing: -.6px; color: #dde; margin-left: 8px; flex: none; }
.darker { background: #464646; height: 100%; line-height: 23px; padding: 0 7px 0 5px; margin-left: 6px; }
.ctext { color: #eee; font-size: 13px; white-space: nowrap; flex: none; }
.tr2 .ctext + .drop { margin-left: -2px; }
.tr2 > .drop:last-child { width: 14px; }
.tr3 { left: 1042px; top: 50px; width: 201px; height: 30px; padding-left: 8px; border: 0; }
.tr3 .box { width: 19px; }
.tr3 .box + .drop + .box { margin-left: 7px; }
.tr3 .dotlabel { margin: 0 7px 0 13px; }
.tr3 .ptf { width: 43px; }

/* notes */
.note { position: absolute; color: #f24040; font-size: 13px; line-height: 20px; white-space: nowrap; }
.n-canvas { left: 1242px; top: 5px; }
.n-line { left: 1247px; top: 54px; }
.n-spec { left: 1086px; top: 104px; font-size: 13.5px; font-family: "Liberation Sans", "Noto Sans CJK SC", sans-serif; }
.n-spec .gap { margin-top: 20px; }
.n-spec .in { padding-left: 27px; }
.n-word { left: 1089px; top: 280px; font-family: "Liberation Sans", "Noto Sans CJK SC", sans-serif; }

/* chart */
.chart { position: absolute; left: 0; top: 340px; width: 226px; height: 306px; background: #fff; }
.chart svg { display: block; font-family: "Liberation Sans", sans-serif; }
.chart .leg text { font-size: 33.5px; fill: #111; }
.chart .tk text { font-size: 40px; fill: #111; }
.chart .xl { font-size: 50px; fill: #111; }
.chart .yl { font-size: 50px; fill: #111; }
.chart .cl { font-size: 40px; fill: #111; }
.chart .rd { font-size: 40px; fill: #f43c3c; font-family: "Noto Sans CJK SC", sans-serif; }
.chart .rd.big { font-size: 38px; }

/* tooltips */
.tip { position: absolute; display: flex; align-items: center; padding-left: 6px; background: rgba(38,38,38,.72); color: #f2f2f2; font-size: 13px; line-height: 20px; border-radius: 3px; white-space: nowrap; }
.tip.dark { background: #2c3034; }
.tip.arrow::before { content: ""; position: absolute; left: -4px; top: 50%; margin-top: -4px; border-right: 4px solid rgba(38,38,38,.72); border-top: 4px solid transparent; border-bottom: 4px solid transparent; }
.t-emf { left: 124px; top: 0; width: 95px; height: 32px; }
.t-name { left: 416px; top: 24px; width: 70px; height: 32px; }
.t-copy1 { left: 545px; top: 214px; width: 58px; height: 32px; }
.t-align { left: 604px; top: 310px; width: 96px; height: 32px; }
.t-rect { left: 635px; top: 61px; width: 58px; height: 32px; }
.t-inner { left: 637px; top: 122px; width: 96px; height: 52px; }
.t-drag { left: 998px; top: 241px; width: 136px; height: 32px; }
.t-copy2 { left: 909px; top: 264px; width: 66px; height: 32px; font-size: 15px; }

/* badges */
.bdg { position: absolute; width: 20px; height: 20px; margin: -10px 0 0 -10px; border-radius: 50%; background: #f33238; color: #fff; font-size: 13px; line-height: 20px; text-align: center; font-family: "Liberation Sans", sans-serif; }
.bdg.teal { background: #18c8c8; }
.p1 { left: 104px; top: 15px; } .p2 { left: 15px; top: 54px; } .p3 { left: 216px; top: 122px; }
.p4 { left: 397px; top: 40px; } .p5 { left: 300px; top: 61px; } .p6 { left: 324px; top: 83px; }
.p7 { left: 324px; top: 104px; } .p8 { left: 297px; top: 125px; } .p9 { left: 325px; top: 146px; }
.p10 { left: 352px; top: 167px; } .p11 { left: 351px; top: 188px; } .p12 { left: 324px; top: 208px; }
.p13 { left: 321px; top: 229px; } .p14 { left: 523px; top: 124px; } .p15 { left: 451px; top: 258px; }
.p16 { left: 523px; top: 83px; } .p17 { left: 571px; top: 288px; } .p18 { left: 523px; top: 103px; }
.p19 { left: 538px; top: 326px; } .p20 { left: 585px; top: 326px; } .p21 { left: 616px; top: 77px; }
.p22 { left: 329px; top: 326px; } .p23 { left: 526px; top: 230px; } .p24 { left: 617px; top: 110px; }
.p25 { left: 618px; top: 138px; } .p26 { left: 979px; top: 256px; } .p27 { left: 992px; top: 35px; }
.p28 { left: 203px; top: 214px; } .p29 { left: 890px; top: 280px; }
```
